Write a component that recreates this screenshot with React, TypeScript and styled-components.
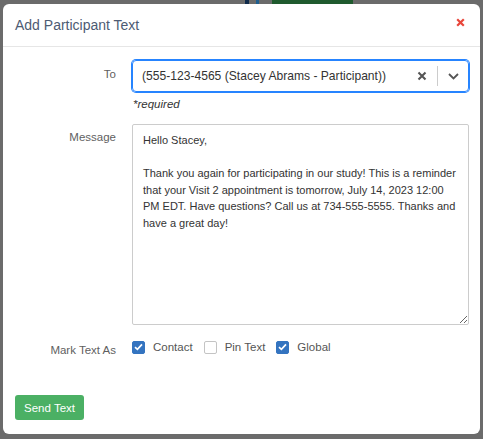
import React from "react";
import styled, { createGlobalStyle } from "styled-components";

const FONT = `"Liberation Sans", Arial, sans-serif`;

const Global = createGlobalStyle`
  html, body { margin: 0; padding: 0; }
  body {
    background:
      linear-gradient(to right,
        transparent 245px, #0f2a4a 245px, #0f2a4a 249px, transparent 249px,
        transparent 256px, #1f5f8f 256px, #1f5f8f 259px, transparent 259px,
        transparent 272px, #1f5a2e 272px, #1f5a2e 353px, transparent 353px) top left / 100% 4px no-repeat,
      #6b6b6b;
    font-family: ${FONT};
    width: 483px;
    height: 439px;
    overflow: hidden;
  }
`;

const Modal = styled.div`
  margin: 4px 3px 0 3px;
  width: 477px;
  height: 430px;
  background: #fff;
  border-radius: 6px;
  display: flex;
  flex-direction: column;
  box-sizing: border-box;
`;

const Header = styled.div`
  height: 43px;
  flex: 0 0 auto;
  display: flex;
  align-items: center;
  justify-content: space-between;
  padding: 0 14px 0 12px;
  border-bottom: 1px solid #e6e6e6;
  box-sizing: border-box;
`;

const Title = styled.h2`
  margin: 0;
  font-size: 14px;
  font-weight: 400;
  color: #4d5b73;
`;

const Close = styled.button`
  border: 0;
  background: none;
  padding: 0;
  margin-top: -6px;
  width: 12px;
  height: 12px;
  display: flex;
  align-items: center;
  justify-content: center;
  cursor: pointer;
`;

const Body = styled.div`
  flex: 1 1 auto;
  padding: 13px 11px 0 0;
  display: grid;
  grid-template-columns: 113px 337px;
  column-gap: 16px;
  align-content: start;
`;

const Label = styled.label<{ $top: number }>`
  font-size: 11.5px;
  color: #5f5f5f;
  text-align: right;
  padding-top: ${(p) => p.$top}px;
`;

const Field = styled.div`
  display: flex;
  flex-direction: column;
`;

const Select = styled.div`
  height: 32px;
  box-sizing: border-box;
  border: 1px solid #2684ff;
  box-shadow: 0 0 0 1px #2684ff;
  border-radius: 4px;
  display: flex;
  align-items: center;
  padding-left: 9px;
`;

const SelectValue = styled.div`
  flex: 1;
  font-size: 12.1px;
  color: #333;
  white-space: nowrap;
  overflow: hidden;
`;

const Indicator = styled.div`
  width: 30px;
  height: 100%;
  display: flex;
  align-items: center;
  justify-content: center;
`;

const Sep = styled.div`
  width: 1px;
  height: 20px;
  background: #cccccc;
`;

const Required = styled.div`
  font-size: 11.5px;
  font-style: italic;
  color: #333;
  margin-top: 6px;
  margin-left: 1px;
  height: 26px;
`;

const TextArea = styled.textarea`
  height: 201px;
  box-sizing: border-box;
  border: 1px solid #cccccc;
  border-radius: 2px;
  padding: 7px 10px;
  font-family: ${FONT};
  font-size: 11px;
  line-height: 16.5px;
  color: #333;
  resize: vertical;
  outline: none;
  margin: 0;
`;

const Checks = styled.div`
  display: flex;
  align-items: center;
  margin-top: 13px;
  gap: 11px;
`;

const CheckItem = styled.label`
  display: flex;
  align-items: center;
  gap: 8px;
  font-size: 11.5px;
  color: #555;
`;

const Box = styled.span<{ $on: boolean }>`
  width: 13px;
  height: 13px;
  box-sizing: border-box;
  border-radius: 2px;
  border: 1px solid ${(p) => (p.$on ? "#3474c0" : "#c4c4c4")};
  background: ${(p) => (p.$on ? "#3474c0" : "#fff")};
  display: flex;
  align-items: center;
  justify-content: center;
`;

const Footer = styled.div`
  padding: 0 0 14px 12px;
`;

const SendButton = styled.button`
  width: 69px;
  height: 25px;
  border: 0;
  border-radius: 3px;
  background: #4bb064;
  color: #fff;
  font-family: ${FONT};
  font-size: 11.5px;
  padding: 0;
`;

const Check = ({ on, label }: { on: boolean; label: string }) => (
  <CheckItem>
    <Box $on={on}>
      {on && (
        <svg width="9" height="8" viewBox="0 0 9 8">
          <path d="M1 4.2 L3.4 6.4 L8 1.4" stroke="#fff" strokeWidth="1.7" fill="none" />
        </svg>
      )}
    </Box>
    {label}
  </CheckItem>
);

const message =
  "Hello Stacey,\n\nThank you again for participating in our study! This is a reminder that your Visit 2 appointment is tomorrow, July 14, 2023 12:00 PM EDT. Have questions? Call us at 734-555-5555. Thanks and have a great day!";

export default function App() {
  return (
    <>
      <Global />
      <Modal>
        <Header>
          <Title>Add Participant Text</Title>
          <Close aria-label="close">
            <svg width="9" height="9" viewBox="0 0 9 9">
              <path d="M1.2 1.2 L7.8 7.8 M7.8 1.2 L1.2 7.8" stroke="#e8463a" strokeWidth="2.2" />
            </svg>
          </Close>
        </Header>
        <Body>
          <Label $top={8}>To</Label>
          <Field>
            <Select>
              <SelectValue>(555-123-4565 (Stacey Abrams - Participant))</SelectValue>
              <Indicator>
                <svg width="10" height="10" viewBox="0 0 10 10">
                  <path d="M1.5 1.5 L8.5 8.5 M8.5 1.5 L1.5 8.5" stroke="#555" strokeWidth="2.1" />
                </svg>
              </Indicator>
              <Sep />
              <Indicator>
                <svg width="11" height="7" viewBox="0 0 11 7">
                  <path d="M1 1 L5.5 5.5 L10 1" stroke="#555" strokeWidth="1.8" fill="none" />
                </svg>
              </Indicator>
            </Select>
            <Required>*required</Required>
          </Field>
          <Label $top={7}>Message</Label>
          <TextArea defaultValue={message} />
          <Label $top={19}>Mark Text As</Label>
          <Checks>
            <Check on label="Contact" />
            <Check on={false} label="Pin Text" />
            <Check on label="Global" />
          </Checks>
        </Body>
        <Footer>
          <SendButton>Send Text</SendButton>
        </Footer>
      </Modal>
    </>
  );
}
